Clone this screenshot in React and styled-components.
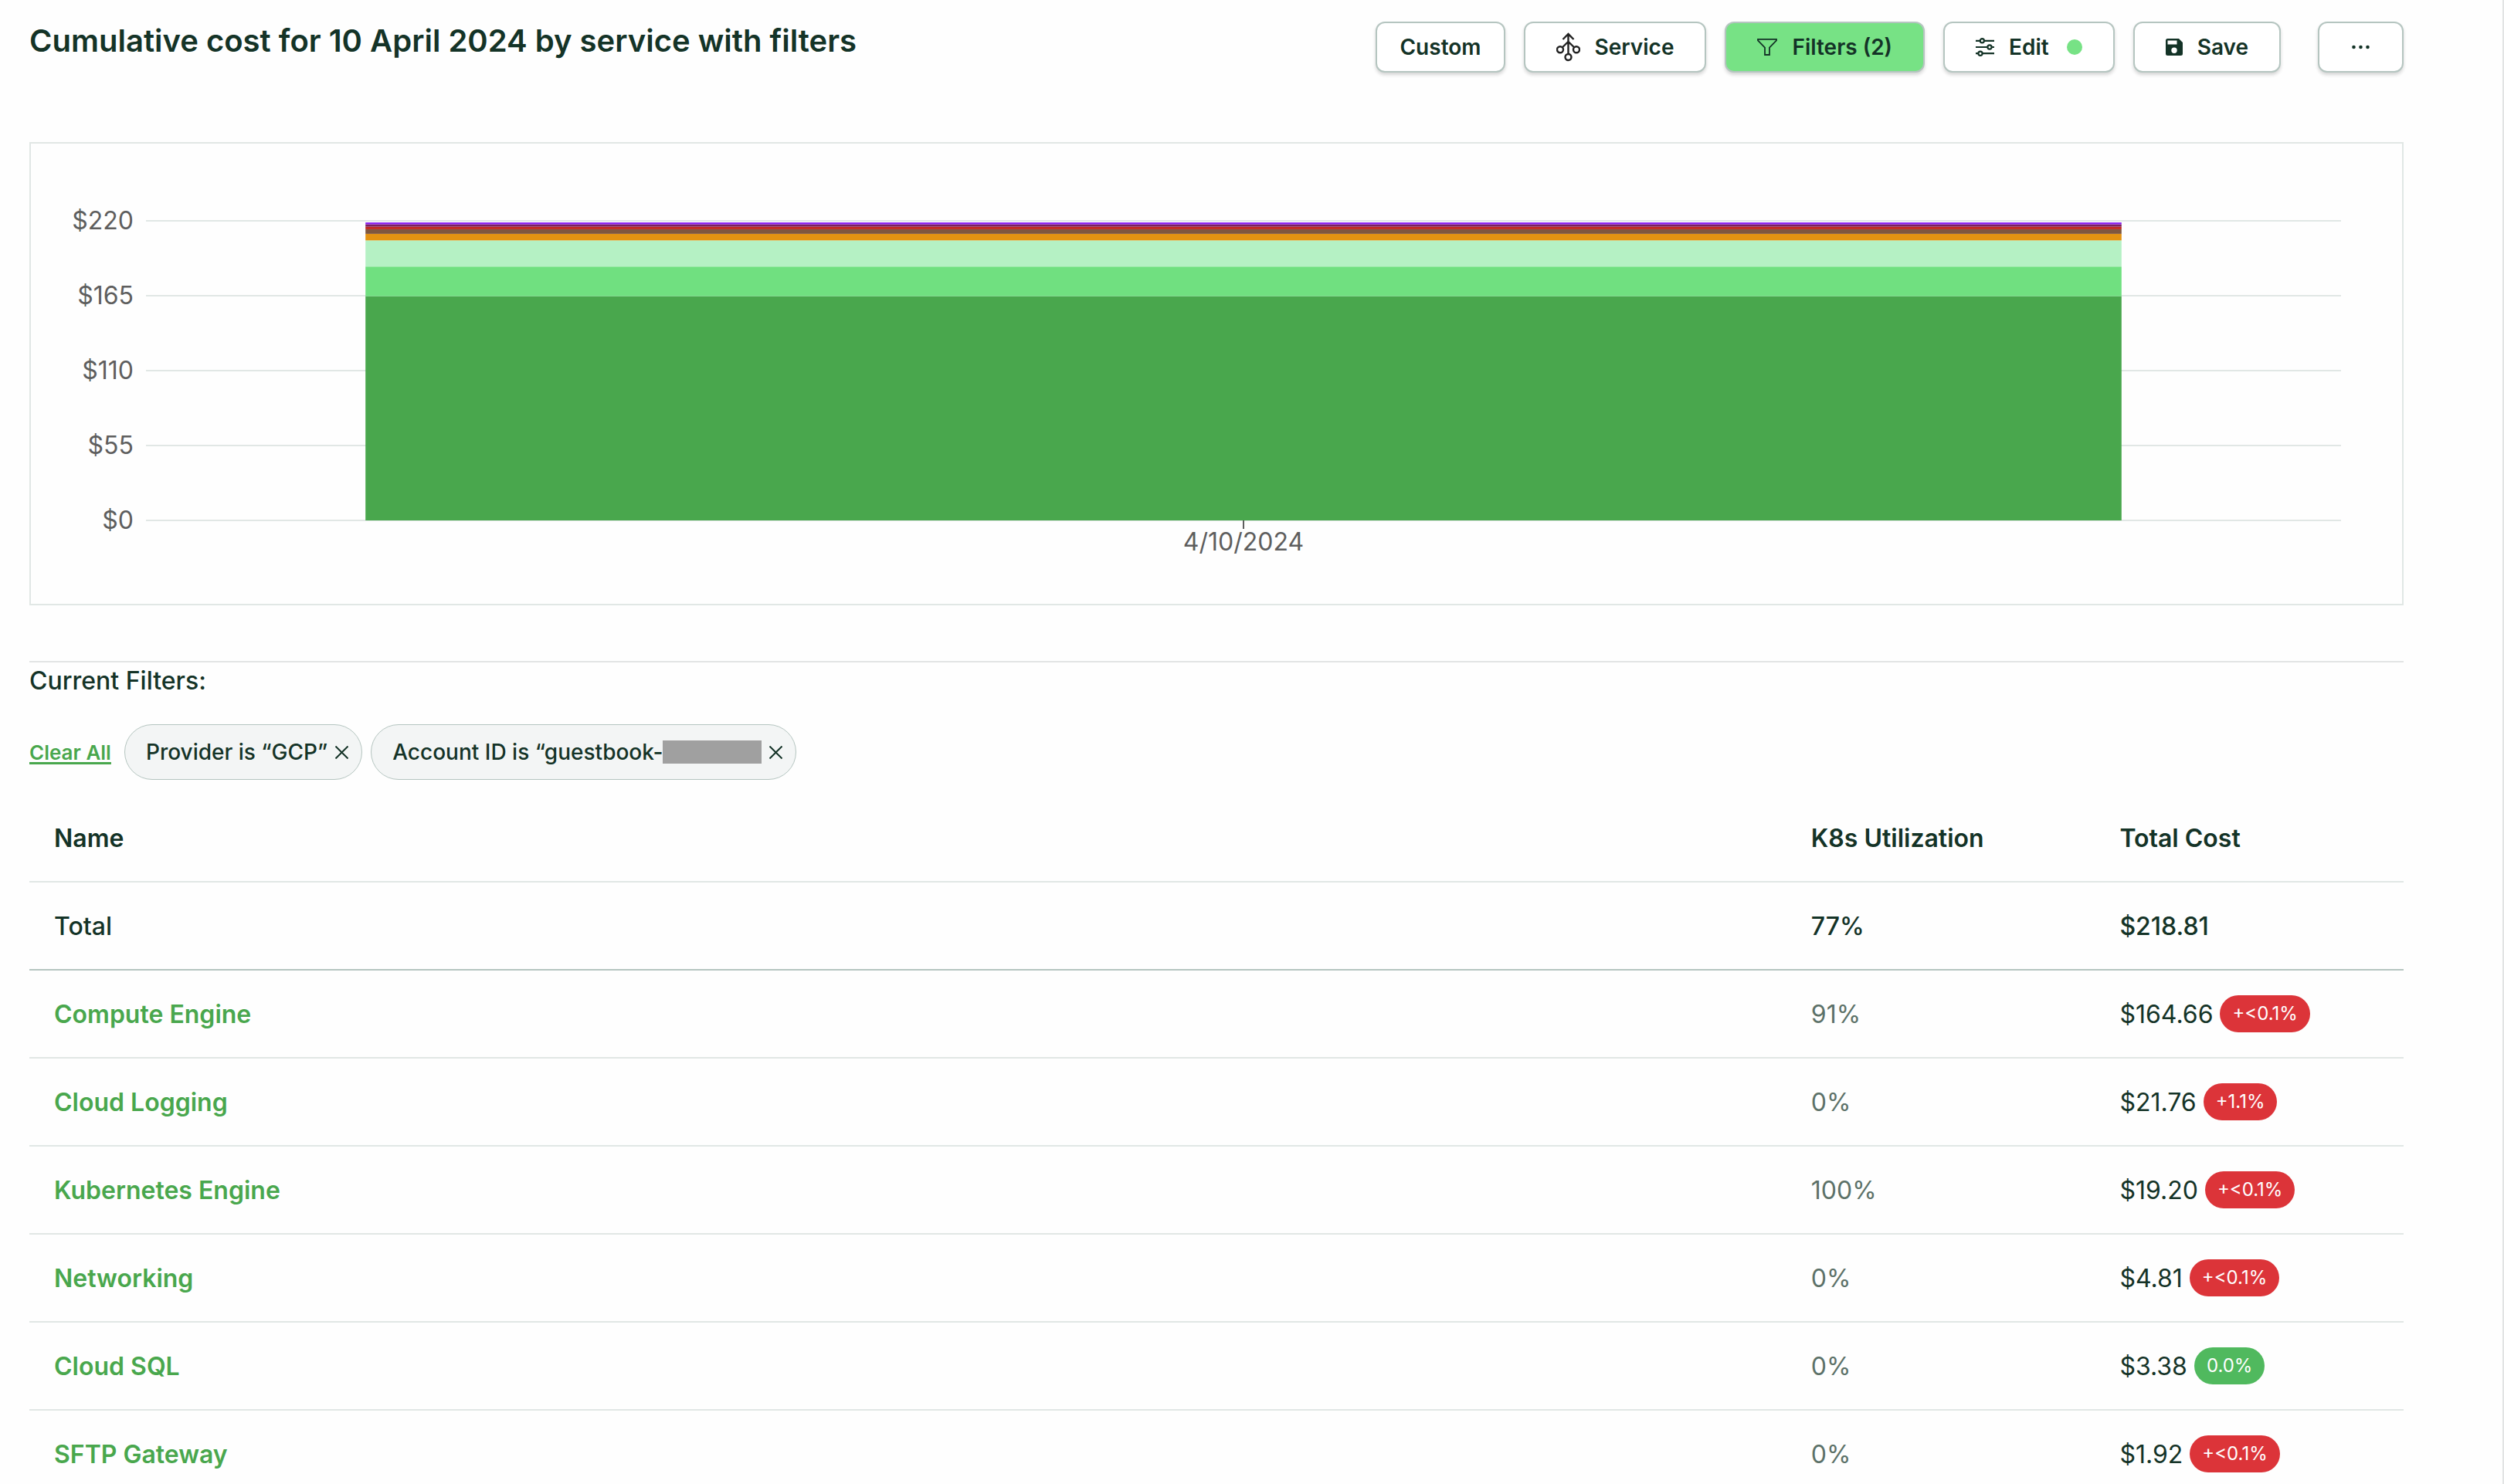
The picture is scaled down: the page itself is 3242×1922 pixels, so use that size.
import React from "react";
import styled, { createGlobalStyle } from "styled-components";

const color = {
  ink: "#143327",
  muted: "#5c7168",
  green: "#49a74d",
  mint: "#77e285",
  line: "#e1e7e5",
  edge: "#b5c5c0",
};

const GlobalStyle = createGlobalStyle`
  *, *::before, *::after { box-sizing: border-box; }
  body {
    margin: 0;
    background: #fefefe;
    color: ${color.ink};
    font-family: Inter, "Liberation Sans", sans-serif;
    font-size: 32px;
  }
  button { font: inherit; color: inherit; cursor: pointer; }
  svg { display: block; flex: none; }
`;

const Page = styled.main`
  height: 100vh;
  overflow: hidden;
  padding: 28px 128px 0 38px;
  border-right: 2px solid #e2e4e4;
`;

const Header = styled.header`
  display: flex;
  justify-content: space-between;
  align-items: flex-start;
  gap: 24px;
`;

const Title = styled.h1`
  margin: 0;
  font-size: 40px;
  line-height: 50px;
  font-weight: 600;
`;

const Toolbar = styled.div`
  display: flex;
  gap: 24px;
`;

const ToolButton = styled.button`
  display: flex;
  align-items: center;
  justify-content: center;
  gap: 19px;
  height: 66px;
  padding: 0 ${(p) => (p.$compact ? 29 : 40)}px;
  margin-left: ${(p) => (p.$apart ? 24 : 0)}px;
  border: 2px solid ${color.edge};
  border-radius: 12px;
  background: ${(p) => (p.$active ? color.mint : "#ffffff")};
  box-shadow: 0 3px 4px rgba(0, 0, 0, 0.16);
  font-size: 28px;
  font-weight: 600;
  white-space: nowrap;
`;

const StatusDot = styled.span`
  width: 20px;
  height: 20px;
  margin-left: 4px;
  border-radius: 50%;
  background: ${color.mint};
`;

const ChartCard = styled.section`
  display: flex;
  gap: 16px;
  margin-top: 90px;
  padding: 84px 79px 64px 0;
  border: 2px solid ${color.line};
  font-size: 32px;
  line-height: 32px;
  color: #5e5e5e;
`;

const AxisLabels = styled.div`
  display: flex;
  flex-direction: column;
  justify-content: space-between;
  flex: none;
  width: 133px;
  height: 420px;
  text-align: right;
`;

const Plot = styled.div`
  flex: 1;
  padding-top: 16px;
`;

const DateLabel = styled.div`
  text-align: center;
`;

const Filters = styled.section`
  margin-top: 72px;
  padding-top: 4px;
  border-top: 2px solid #e2e4e4;
`;

const FiltersTitle = styled.h2`
  margin: 0;
  font-size: 32px;
  line-height: 40px;
  font-weight: 500;
`;

const ChipRow = styled.div`
  display: flex;
  align-items: center;
  gap: 11px;
  margin-top: 36px;
`;

const ClearAll = styled.button`
  margin-right: 6px;
  padding: 0;
  border: 0;
  background: none;
  color: ${color.green};
  font-size: 26px;
  font-weight: 600;
  text-decoration: underline;
  text-decoration-thickness: 3px;
  text-underline-offset: 3px;
  text-decoration-skip-ink: none;
`;

const Chip = styled.span`
  display: flex;
  align-items: center;
  height: 72px;
  padding: 0 17px 0 27px;
  border: 1px solid ${color.edge};
  border-radius: 36px;
  background: #f3f5f5;
  font-size: 28px;
  font-weight: 500;
  white-space: nowrap;
`;

const Redacted = styled.span`
  width: 128px;
  height: 30px;
  background: #a0a0a0;
`;

const ChipClose = styled.button`
  margin-left: 10px;
  padding: 0;
  border: 0;
  background: none;
`;

const CostTable = styled.table`
  width: 100%;
  margin-top: 19px;
  table-layout: fixed;
  border-collapse: separate;
  border-spacing: 0;
`;

const HeadCell = styled.th`
  width: ${(p) => p.$width || "auto"};
  height: 114px;
  padding: 0 32px;
  border-bottom: 2px solid ${color.line};
  font-weight: 600;
  text-align: left;
`;

const Cell = styled.td`
  height: 114px;
  padding: 0 32px;
  border-bottom: 2px solid ${(p) => (p.$total ? color.edge : color.line)};
  color: ${(p) => (p.$muted ? color.muted : color.ink)};
  font-weight: ${(p) => (p.$total ? 500 : 400)};
`;

const ServiceLink = styled.a`
  color: ${color.green};
  font-weight: 600;
  text-decoration: none;
`;

const Cost = styled.div`
  display: flex;
  align-items: center;
  gap: 9px;
`;

const Badge = styled.span`
  padding: 0 16px;
  border-radius: 24px;
  background: ${(p) => (p.$flat ? "#50b95e" : "#dc3439")};
  color: #ffffff;
  font-size: 24px;
  line-height: 48px;
`;

const ServiceIcon = () => (
  <svg width="31" height="38" viewBox="0 0 31 38" fill="none" stroke="#222222" strokeWidth="2.4" aria-hidden="true">
    <path d="M15.5 1.5V27M8.5 9l7-7 7 7M8.2 19l7.3-7 7.3 7" />
    <circle cx="5" cy="22.3" r="4" />
    <circle cx="26" cy="22.3" r="4" />
    <circle cx="15.5" cy="32" r="4" />
  </svg>
);

const FilterIcon = () => (
  <svg width="26" height="24" viewBox="0 0 26 24" fill="none" stroke={color.ink} strokeWidth="1.8" aria-hidden="true">
    <path d="M1 1.8h24v1.7l-9 9V22h-6v-9.500L1 3.500z" />
  </svg>
);

const EditIcon = () => (
  <svg width="24" height="24" viewBox="0 0 24 24" fill="none" stroke={color.ink} strokeWidth="2.2" aria-hidden="true">
    <path d="M0 3.800h5.500M11 3.800h13M0 12h15M20.800 12H24M0 20.200h3M8.800 20.200H24" />
    <circle cx="8.300" cy="3.800" r="2.600" />
    <circle cx="18" cy="12" r="2.600" />
    <circle cx="6" cy="20.200" r="2.600" />
  </svg>
);

const SaveIcon = () => (
  <svg width="22" height="22" viewBox="0 0 22 22" aria-hidden="true">
    <path
      fill={color.ink}
      fillRule="evenodd"
      d="M2.500 0H17l5 5v14.500a2.500 2.500 0 0 1-2.500 2.500h-17A2.500 2.500 0 0 1 0 19.500v-17A2.500 2.500 0 0 1 2.500 0zM2.500 2.500v5H14.500v-5zM11 11.500a3.700 3.700 0 1 0 0 7.400 3.700 3.700 0 0 0 0-7.400z"
    />
  </svg>
);

const MoreIcon = () => (
  <svg width="27" height="6" viewBox="0 0 27 6" fill={color.ink} aria-hidden="true">
    <circle cx="4.500" cy="3" r="2.300" />
    <circle cx="13.500" cy="3" r="2.300" />
    <circle cx="22.500" cy="3" r="2.300" />
  </svg>
);

const CloseIcon = () => (
  <svg width="17" height="17" viewBox="0 0 17 17" stroke={color.ink} strokeWidth="2" aria-hidden="true">
    <path d="M.5.5l16 16M16.500.5l-16 16" />
  </svg>
);

const AXIS_MAX = 220;
const ticks = [220, 165, 110, 55, 0];
const plotHeight = 388;

const segments = [
  { cost: 164.66, fill: "#49a74d" },
  { cost: 21.76, fill: "#70e080" },
  { cost: 19.2, fill: "#b5f1c4" },
  { cost: 4.81, fill: "#e39312" },
  { cost: 3.38, fill: "#7f573f" },
  { cost: 1.92, fill: "#c0271f" },
  { cost: 1.7, fill: "#7a205e" },
  { cost: 1.38, fill: "#8a20f0" },
];

const rows = [
  { name: "Compute Engine", use: "91%", cost: "$164.66", change: "+<0.1%" },
  { name: "Cloud Logging", use: "0%", cost: "$21.76", change: "+1.1%" },
  { name: "Kubernetes Engine", use: "100%", cost: "$19.20", change: "+<0.1%" },
  { name: "Networking", use: "0%", cost: "$4.81", change: "+<0.1%" },
  { name: "Cloud SQL", use: "0%", cost: "$3.38", change: "0.0%", flat: true },
  { name: "SFTP Gateway", use: "0%", cost: "$1.92", change: "+<0.1%" },
];

function CostChart() {
  const scale = plotHeight / AXIS_MAX;
  let sum = 0;
  const bars = segments.map((s) => {
    sum += s.cost;
    return { fill: s.fill, y: plotHeight - sum * scale, height: s.cost * scale };
  });
  return (
    <ChartCard aria-label="Cumulative cost chart">
      <AxisLabels>
        {ticks.map((t) => (
          <span key={t}>${t}</span>
        ))}
      </AxisLabels>
      <Plot>
        <svg width="100%" height="400" overflow="visible" aria-hidden="true">
          {ticks.map((t) => (
            <rect key={t} x="0" y={plotHeight - t * scale - 1} width="100%" height="2" fill={color.line} />
          ))}
          {bars.map((b) => (
            <rect key={b.fill} x="10%" width="80%" y={b.y} height={b.height} fill={b.fill} />
          ))}
          <line x1="50%" x2="50%" y1={plotHeight} y2={plotHeight + 11} stroke="#5e5e5e" strokeWidth="2" />
        </svg>
        <DateLabel>4/10/2024</DateLabel>
      </Plot>
    </ChartCard>
  );
}

export default function App() {
  return (
    <Page>
      <GlobalStyle />
      <Header>
        <Title>Cumulative cost for 10 April 2024 by service with filters</Title>
        <Toolbar>
          <ToolButton type="button" $compact>Custom</ToolButton>
          <ToolButton type="button"><ServiceIcon />Service</ToolButton>
          <ToolButton type="button" $active><FilterIcon />Filters (2)</ToolButton>
          <ToolButton type="button"><EditIcon />Edit<StatusDot /></ToolButton>
          <ToolButton type="button"><SaveIcon />Save</ToolButton>
          <ToolButton type="button" $apart aria-label="More"><MoreIcon /></ToolButton>
        </Toolbar>
      </Header>

      <CostChart />

      <Filters>
        <FiltersTitle>Current Filters:</FiltersTitle>
        <ChipRow>
          <ClearAll type="button">Clear All</ClearAll>
          <Chip>
            Provider is “GCP”
            <ChipClose type="button" aria-label="Remove provider filter"><CloseIcon /></ChipClose>
          </Chip>
          <Chip>
            Account ID is “guestbook-
            <Redacted />
            <ChipClose type="button" aria-label="Remove account filter"><CloseIcon /></ChipClose>
          </Chip>
        </ChipRow>
      </Filters>

      <CostTable>
        <thead>
          <tr>
            <HeadCell scope="col">Name</HeadCell>
            <HeadCell scope="col" $width="13%">K8s Utilization</HeadCell>
            <HeadCell scope="col" $width="13%">Total Cost</HeadCell>
          </tr>
        </thead>
        <tbody>
          <tr>
            <Cell $total>Total</Cell>
            <Cell $total>77%</Cell>
            <Cell $total>$218.81</Cell>
          </tr>
          {rows.map((r) => (
            <tr key={r.name}>
              <Cell><ServiceLink href="#">{r.name}</ServiceLink></Cell>
              <Cell $muted>{r.use}</Cell>
              <Cell>
                <Cost>
                  {r.cost}
                  <Badge $flat={r.flat}>{r.change}</Badge>
                </Cost>
              </Cell>
            </tr>
          ))}
        </tbody>
      </CostTable>
    </Page>
  );
}
